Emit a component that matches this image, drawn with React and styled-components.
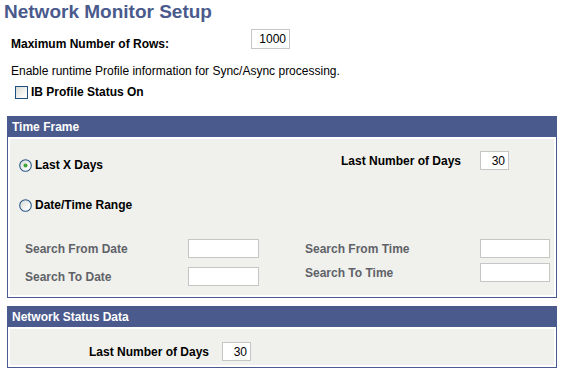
import React from "react";
import styled, { createGlobalStyle } from "styled-components";

const GlobalStyle = createGlobalStyle`
  body {
    margin: 0;
    background: #ffffff;
    font-family: "Liberation Sans", Arial, sans-serif;
    font-size: 12px;
    color: #000;
  }
`;

const Page = styled.div`
  width: 569px;
  height: 377px;
  overflow: hidden;
`;

const Title = styled.h1`
  margin: 0;
  padding: 1px 0 0 4px;
  font-size: 19px;
  line-height: 22px;
  font-weight: bold;
  color: #4a5a8c;
`;

const FieldRow = styled.div`
  display: flex;
  align-items: flex-start;
  height: ${(p) => p.h}px;
  margin-top: ${(p) => p.top}px;
  padding-left: ${(p) => p.indent}px;
`;

const Label = styled.span`
  display: inline-block;
  width: ${(p) => (p.width ? `${p.width}px` : "auto")};
  margin-top: ${(p) => p.offset || 0}px;
  font-weight: bold;
  line-height: 14px;
  color: ${(p) => (p.disabled ? "#5f6268" : "#000")};
  white-space: nowrap;
`;

const TextInput = styled.input`
  box-sizing: border-box;
  width: ${(p) => p.w}px;
  height: ${(p) => p.h || 19}px;
  margin: 0;
  padding: 0 3px 0 2px;
  border: 1px solid #c6c6c6;
  background: #fff;
  font-family: "Liberation Sans", Arial, sans-serif;
  font-size: 12px;
  color: #000;
  text-align: right;
  outline: none;
`;

const Info = styled.p`
  margin: 15px 0 0 11px;
  line-height: 14px;
`;

const CheckRow = styled.label`
  display: flex;
  align-items: center;
  gap: 3px;
  margin: 7px 0 0 15px;
  height: 14px;
`;

const CheckBox = styled.span`
  box-sizing: border-box;
  width: 13px;
  height: 13px;
  border: 1px solid #1e4f80;
  background: linear-gradient(135deg, #d9d9d5 0%, #f4f4f2 60%, #ffffff 100%);
`;

const Panel = styled.section`
  box-sizing: border-box;
  width: 550px;
  margin: ${(p) => p.top}px 0 0 7px;
  border: 1px solid #4a5a8c;
  background: #fff;
`;

const PanelHeader = styled.div`
  height: 20px;
  padding-left: 4px;
  background: #4a5a8c;
  color: #fff;
  font-weight: bold;
  line-height: 20px;
`;

const PanelBody = styled.div`
  margin: 2px;
  height: ${(p) => p.h}px;
  background: #f0f1ec;
  overflow: hidden;
`;

const TopLine = styled.div`
  display: flex;
  align-items: flex-start;
  padding-top: 12px;
`;

const RadioOption = styled.label`
  display: flex;
  align-items: center;
  gap: 3px;
  margin: ${(p) => p.top}px 0 0 9px;
`;

const DaysGroup = styled.div`
  display: flex;
  align-items: center;
  margin-left: auto;
  margin-right: 45px;
`;

const SearchArea = styled.div`
  display: flex;
  margin-top: 27px;
`;

const SearchColumn = styled.div`
  display: flex;
  flex-direction: column;
  gap: ${(p) => p.gap}px;
  margin-left: ${(p) => p.left}px;
`;

const SearchRow = styled.div`
  display: flex;
  align-items: center;
`;

const StatusRow = styled.div`
  display: flex;
  align-items: center;
  padding: 13px 0 0 79px;
`;

function Radio({ checked }) {
  const id = checked ? "radioOn" : "radioOff";
  return (
    <svg width="13" height="13" viewBox="0 0 13 13">
      <defs>
        <linearGradient id={id} x1="0" y1="0" x2="1" y2="1">
          <stop offset="0" stopColor="#d6d6d2" />
          <stop offset="0.6" stopColor="#f5f5f3" />
          <stop offset="1" stopColor="#ffffff" />
        </linearGradient>
      </defs>
      <circle cx="6.5" cy="6.5" r="5.8" fill={`url(#${id})`} stroke="#2a5a88" strokeWidth="1.1" />
      {checked && <circle cx="6.5" cy="6.5" r="2" fill="#3aa63a" />}
    </svg>
  );
}

export default function App() {
  return (
    <Page>
      <GlobalStyle />
      <Title>Network Monitor Setup</Title>

      <FieldRow top={6} h={20} indent={11}>
        <Label width={240} offset={8}>Maximum Number of Rows:</Label>
        <TextInput w={39} h={20} defaultValue="1000" />
      </FieldRow>

      <Info>Enable runtime Profile information for Sync/Async processing.</Info>
      <CheckRow>
        <CheckBox />
        <Label>IB Profile Status On</Label>
      </CheckRow>

      <Panel top={17}>
        <PanelHeader>Time Frame</PanelHeader>
        <PanelBody h={156}>
          <TopLine>
            <RadioOption top={7}>
              <Radio checked />
              <Label>Last X Days</Label>
            </RadioOption>
            <DaysGroup>
              <Label width={139}>Last Number of Days</Label>
              <TextInput w={29} defaultValue="30" />
            </DaysGroup>
          </TopLine>
          <RadioOption top={26}>
            <Radio />
            <Label>Date/Time Range</Label>
          </RadioOption>
          <SearchArea>
            <SearchColumn gap={9} left={15}>
              <SearchRow>
                <Label width={163} disabled>Search From Date</Label>
                <TextInput w={71} />
              </SearchRow>
              <SearchRow>
                <Label width={163} disabled>Search To Date</Label>
                <TextInput w={71} />
              </SearchRow>
            </SearchColumn>
            <SearchColumn gap={5} left={46}>
              <SearchRow>
                <Label width={175} disabled>Search From Time</Label>
                <TextInput w={70} />
              </SearchRow>
              <SearchRow>
                <Label width={175} disabled>Search To Time</Label>
                <TextInput w={70} />
              </SearchRow>
            </SearchColumn>
          </SearchArea>
        </PanelBody>
      </Panel>

      <Panel top={8}>
        <PanelHeader>Network Status Data</PanelHeader>
        <PanelBody h={36}>
          <StatusRow>
            <Label width={133}>Last Number of Days</Label>
            <TextInput w={29} defaultValue="30" />
          </StatusRow>
        </PanelBody>
      </Panel>
    </Page>
  );
}
